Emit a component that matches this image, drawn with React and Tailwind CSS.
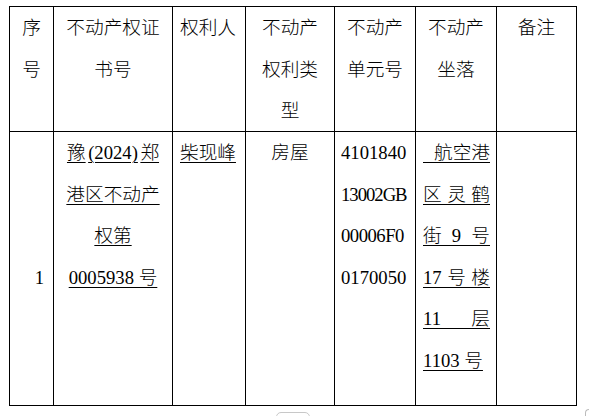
const underlineLine =
  "[background:linear-gradient(#000,#000)_0_30px/100%_1px_no-repeat]";

const Cell = ({ className = "", children }) => (
  <div className={`bg-white leading-[41.5px] ${className}`}>{children}</div>
);

const U = ({ children }) => (
  <span className="underline decoration-1 underline-offset-[3px]">{children}</span>
);

export default function App() {
  const address = [
    ["航空港"],
    ["区", "灵", "鹤"],
    ["街", "9", "号"],
    ["17", "号", "楼"],
    ["11", "层"],
  ];

  return (
    <div
      className="relative w-[589px] h-[416px] overflow-hidden bg-white text-black text-[18.67px] font-light"
      style={{ fontFamily: '"Liberation Serif", "Noto Sans CJK SC", serif' }}
    >
      <div className="pl-[9px] pt-[6px]">
        <div className="grid w-[568px] grid-cols-[43px_118px_72px_88px_80px_80px_79px] grid-rows-[124px_273px] gap-px bg-black p-px">
          {/* header */}
          <Cell className="text-center">
            <div>序</div>
            <div>号</div>
          </Cell>
          <Cell className="text-center px-[7px]">
            <div>不动产权证</div>
            <div>书号</div>
          </Cell>
          <Cell className="pl-[7px]">权利人</Cell>
          <Cell className="text-center">
            <div>不动产</div>
            <div>权利类</div>
            <div>型</div>
          </Cell>
          <Cell className="text-center">
            <div>不动产</div>
            <div>单元号</div>
          </Cell>
          <Cell className="text-center">
            <div>不动产</div>
            <div>坐落</div>
          </Cell>
          <Cell className="text-center">备注</Cell>

          {/* body */}
          <Cell className="text-center pl-[16px] pt-[124.5px]">1</Cell>
          <Cell className="text-center px-[7px]">
            <div>
              <U>
                豫<span className="px-[2.5px]">(2024)</span>郑
              </U>
            </div>
            <div>
              <U>港区不动产</U>
            </div>
            <div>
              <U>权第</U>
            </div>
            <div>
              <U>0005938 号</U>
            </div>
          </Cell>
          <Cell className="pl-[7px]">
            <U>柴现峰</U>
          </Cell>
          <Cell className="text-center">房屋</Cell>
          <Cell className="pl-[6px]">
            <div>4101840</div>
            <div className="tracking-[-1px]">13002GB</div>
            <div className="tracking-[-0.5px]">00006F0</div>
            <div>0170050</div>
          </Cell>
          <Cell className="pl-[7px]">
            {address.map((parts, i) => (
              <div
                key={i}
                className={`flex w-[67px] h-[41.5px] ${parts.length === 1 ? "justify-end" : "justify-between"} ${underlineLine}`}
              >
                {parts.map((p) => (
                  <span key={p}>{p}</span>
                ))}
              </div>
            ))}
            <div>
              <U>1103 号</U>
            </div>
          </Cell>
          <Cell />
        </div>
      </div>

      {/* bits of the viewer toolbar peeking in at the bottom */}
      <div className="absolute left-[276px] top-[412px] h-[12px] w-[34px] rounded-[5px] border border-[#c8c8c8] bg-white" />
      <div className="absolute left-[585px] top-[409px] h-[10px] w-[10px] rounded-tl-[4px] border-l border-t border-[#bbb]" />
    </div>
  );
}
